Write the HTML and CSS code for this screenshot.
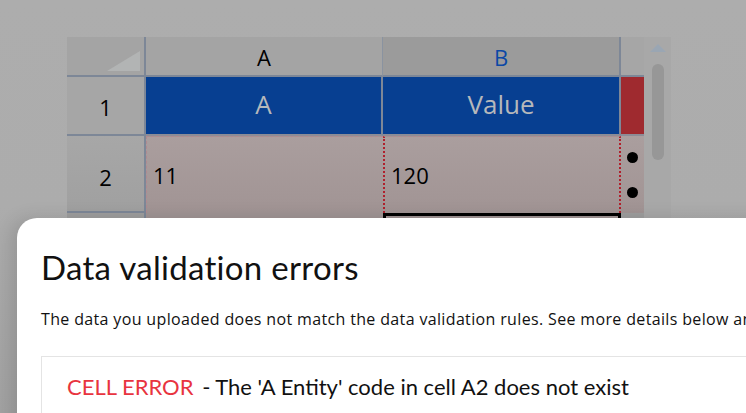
FILE: index.html
```html
<!DOCTYPE html>
<html>
<head>
<meta charset="utf-8">
<link rel="stylesheet" href="styles.css">
</head>
<body>
<div class="page">
  <div class="sheet-area">
    <div class="sheet">
      <div class="cell corner"><span class="corner-tri"></span></div>
      <div class="cell colhead">A</div>
      <div class="cell colhead sel">B</div>
      <div class="cell colhead extra"></div>

      <div class="cell rowhead r1">1</div>
      <div class="cell title-cell">A</div>
      <div class="cell title-cell">Value</div>
      <div class="cell red"></div>

      <div class="cell rowhead r2">2</div>
      <div class="cell data first">11</div>
      <div class="cell data err">120</div>
      <div class="cell dots"><span class="dot"></span><span class="dot"></span></div>

      <div class="cell rowhead r3"></div>
      <div class="cell data3"></div>
      <div class="cell data3 active"></div>
      <div class="cell data3 edge"></div>
    </div>
    <div class="scrollbar">
      <span class="arrow"></span>
      <span class="thumb"></span>
    </div>
  </div>

  <div class="modal">
    <h1 class="modal-title">Data validation errors</h1>
    <p class="modal-desc">The data you uploaded does not match the data validation rules. See more details below and fix them before uploading again.</p>
    <div class="error-box">
      <span class="err-label">CELL ERROR</span>
      <span class="err-text">- The 'A Entity' code in cell A2 does not exist</span>
    </div>
  </div>
</div>
</body>
</html>
```

FILE: styles.css
```css
* { box-sizing: border-box; }
html, body {
  margin: 0;
  padding: 0;
  width: 746px;
  height: 413px;
  overflow: hidden;
}
body {
  background: #acacac;
  font-family: "Open Sans", "Noto Sans", sans-serif;
}
.page {
  position: relative;
  width: 746px;
  height: 413px;
  overflow: hidden;
  background: linear-gradient(to bottom, #adadad 0%, #acacac 50%, #a2a2a2 100%);
}
.sheet-area {
  display: flex;
  padding: 37px 0 0 67px;
}
.sheet {
  display: grid;
  grid-template-columns: 79px 237px 238px 23px;
  grid-template-rows: 40px 59px 77px 40px;
}
.cell {
  display: flex;
  align-items: center;
  justify-content: center;
  color: #000;
  font-size: 22px;
}
.corner {
  position: relative;
  background: #a4a4a4;
  border-right: 2px solid #7d8797;
  border-bottom: 2px solid #7d8797;
}
.corner-tri {
  position: absolute;
  right: 4px;
  bottom: 4px;
  width: 0;
  height: 0;
  border-left: 33px solid transparent;
  border-bottom: 20px solid #b2b4b4;
}
.colhead {
  background: #a4a4a4;
  border-right: 1px solid #8a93a0;
  border-bottom: 2px solid #7d8797;
  font-size: 22px;
  padding-top: 2px;
}
.colhead.sel {
  background: #9b9b9b;
  color: #0b48a6;
  border-right: 2px solid #7d8797;
}
.colhead.extra {
  background: #a6a6a6;
  border-right: none;
}
.rowhead {
  background: #a6a6a6;
  border-right: 2px solid #7d8797;
  border-bottom: 2px solid #7d8797;
  padding-top: 2px;
}
.rowhead.r2 {
  background: linear-gradient(to bottom, #a7a7a7, #a0a0a0);
  padding-top: 6px;
}
.rowhead.r3 { background: #9e9e9e; }
.title-cell {
  background: #073f91;
  color: #b6b8bb;
  font-size: 26px;
  padding-bottom: 4px;
  border-right: 2px solid #7d8797;
  border-bottom: 2px solid #8c8c96;
}
.red {
  background: #9f2a2f;
  border-bottom: 2px solid #8c8c96;
}
.data {
  justify-content: flex-start;
  padding: 0 0 0 6px;
  font-size: 22px;
  background: linear-gradient(to bottom, #aa9e9e, #a19494);
  border-top: 1px dashed #b08a90;
}
.data.first { border-left: 1px dashed #b08a90; }
.data.err {
  border-left: 2px dotted #b0202c;
  border-right: 2px dotted #b0202c;
}
.dots {
  flex-direction: column;
  justify-content: space-between;
  align-items: center;
  padding: 16px 0 15px;
  background: linear-gradient(to bottom, #aa9e9e, #a19494);
}
.dot {
  width: 11px;
  height: 11px;
  border-radius: 50%;
  background: #000;
}
.data3 { background: #a09494; }
.data3.active {
  border-top: 3px solid #000;
  border-left: 3px solid #000;
  border-right: 3px solid #000;
}
.data3.edge { background: #9e9e9e; }
.scrollbar {
  position: relative;
  width: 27px;
  height: 200px;
  display: flex;
  flex-direction: column;
  align-items: center;
  padding-top: 7px;
  background: #a8a8a8;
}
.arrow {
  width: 0;
  height: 0;
  border-left: 8px solid transparent;
  border-right: 8px solid transparent;
  border-bottom: 8px solid #9aa6b3;
}
.thumb {
  margin-top: 12px;
  width: 12px;
  height: 96px;
  border-radius: 6px;
  background: #979797;
}
.modal {
  position: absolute;
  left: 17px;
  top: 218px;
  width: 800px;
  height: 260px;
  background: #fff;
  border-top-left-radius: 20px;
  box-shadow: -6px 0 18px rgba(0,0,0,0.12);
  padding: 28px 0 0 24px;
}
.modal-title {
  margin: 0;
  font-family: "Lato", "Noto Sans", sans-serif;
  font-weight: 400;
  font-size: 33px;
  line-height: 42px;
  color: #111;
  letter-spacing: 0.3px;
}
.modal-desc {
  margin: 20px 0 0;
  font-family: "Open Sans", "Noto Sans", sans-serif;
  font-size: 16px;
  line-height: 22px;
  letter-spacing: 0.35px;
  color: #111;
  white-space: nowrap;
}
.error-box {
  margin-top: 26px;
  border-top: 1px solid #e4e4e4;
  border-left: 1px solid #e4e4e4;
  height: 80px;
  padding: 16px 0 0 25px;
  font-family: "Lato", "Noto Sans", sans-serif;
  font-size: 22px;
  white-space: nowrap;
}
.err-label { color: #e8343f; margin-right: 3px; }
.err-text { color: #111; }
```
